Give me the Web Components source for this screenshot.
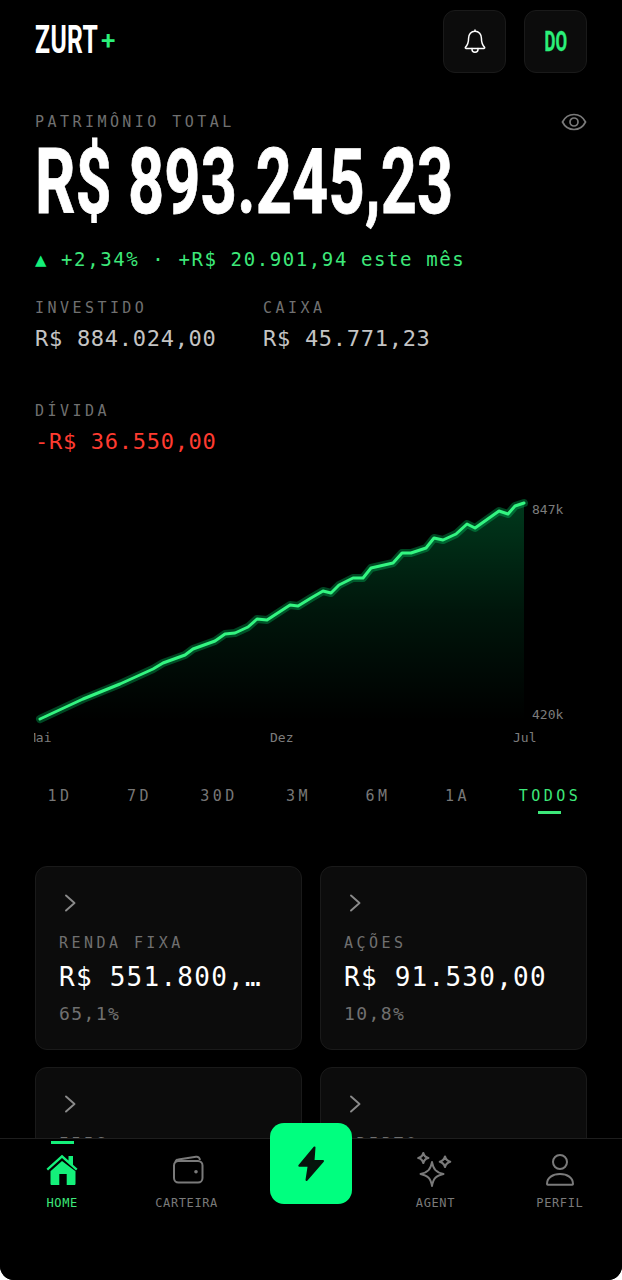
<!DOCTYPE html>
<html lang="pt-BR"><head><meta charset="utf-8"><title>ZURT</title>
<style>
html,body{margin:0;padding:0;background:#fff}
body{width:622px;height:1280px;overflow:hidden;font-family:"DejaVu Sans Mono","Liberation Mono",monospace}
</style></head><body>
<zurt-app>
  <zurt-header></zurt-header>
  <zurt-summary></zurt-summary>
  <zurt-chart></zurt-chart>
  <zurt-ranges></zurt-ranges>
  <div slot="cards">
    <zurt-card label="RENDA FIXA" value="R$ 551.800,00" pct="65,1%"></zurt-card>
    <zurt-card label="AÇÕES" value="R$ 91.530,00" pct="10,8%"></zurt-card>
    <zurt-card label="FIIS"></zurt-card>
    <zurt-card label="CRIPTO"></zurt-card>
  </div>
  <zurt-nav slot="nav"></zurt-nav>
</zurt-app>
<script>
const MONO='"DejaVu Sans Mono","Liberation Mono",monospace';
const COND='Roboto,"Liberation Sans",Arial,sans-serif';
function def(name,html,init){
  customElements.define(name,class extends HTMLElement{
    constructor(){super();this.attachShadow({mode:'open'}).innerHTML=typeof html==='function'?html(this):html;}
    connectedCallback(){ if(init) init(this); }
  });
}
def('zurt-app',`<style>
:host{display:block;position:relative;width:622px;height:1280px;background:#000;overflow:hidden;border-radius:0 0 14px 14px;color:#fff}
.scroll{padding:0 35px;height:1138px;overflow:hidden}
::slotted([slot=cards]){display:grid;grid-template-columns:267px 267px;gap:17px 18px;margin-top:0}
</style><div class="scroll"><slot></slot><slot name="cards"></slot></div><slot name="nav"></slot>`);

def('zurt-header',`<style>
:host{display:flex;align-items:flex-start;justify-content:space-between;padding-top:10px;height:64px}
.logo{display:flex;align-items:center;height:60px;font-family:${COND};font-weight:700;white-space:nowrap}
.z{display:inline-block;font-size:38px;line-height:60px;letter-spacing:.6px;transform:scaleX(.65);transform-origin:0 50%;width:66px}
.p{color:#2bf07a;font-size:26px;font-weight:500;margin-top:-1px;line-height:60px}
.btns{display:flex;gap:18px}
.b{width:61px;height:61px;border:1px solid #1a1a1a;border-radius:12px;background:#0c0c0c;display:flex;align-items:center;justify-content:center}
.do{display:inline-block;color:#2bf07a;font:700 28px ${COND};transform:scaleX(.6);-webkit-text-stroke:.4px #2bf07a}
svg{display:block}
</style>
<div class="logo"><span class="z">ZURT</span><span class="p">+</span></div>
<div class="btns">
<div class="b"><svg width="24" height="26" viewBox="0 0 24 26" fill="none" stroke="#fff" stroke-width="1.5" stroke-linejoin="round" stroke-linecap="round"><path d="M12 2.200c-3.900 0-6.400 3-6.400 6.900 0 5.200-1.600 7.700-3.200 9.300-.3.400-.1 1 .5 1h18.200c.6 0 .8-.6.5-1-1.600-1.600-3.200-4.100-3.200-9.300 0-3.900-2.500-6.900-6.400-6.900z"/><path d="M9 19.600v.7a3 3 0 0 0 6 0v-.7"/><path d="M12 1v1.200"/></svg></div>
<div class="b"><span class="do">DO</span></div>
</div>`);

def('zurt-summary',`<style>
:host{display:block;font-family:${MONO}}
.lbl{font-size:15px;letter-spacing:3.45px;color:#707070;line-height:20px;white-space:nowrap}
.top{display:flex;justify-content:space-between;align-items:center;padding-top:38px}
.big{height:96px;margin-top:2px;font:700 91px/96px ${COND};letter-spacing:.4px;color:#fff;white-space:nowrap;transform:scaleX(.692);transform-origin:0 50%;-webkit-text-stroke:.8px #fff}
.delta{margin-top:16px;font-size:19px;letter-spacing:1.6px;line-height:26px;color:#3de87a;white-space:nowrap}
.delta i{font-style:normal;color:#14f07a}
.stats{display:grid;grid-template-columns:228px 1fr;row-gap:47px;margin-top:26px}
.v{font-size:22px;letter-spacing:.72px;line-height:30px;margin-top:6px;color:#c4c4c4;white-space:nowrap}
.r{color:#ff3b30}
</style>
<div class="top"><span class="lbl">PATRIMÔNIO TOTAL</span>
<svg width="26" height="20" viewBox="0 0 26 20" fill="none" stroke="#7a7a7a" stroke-width="1.7"><path d="M1.500 10C4 5 8 2.500 13 2.500S22 5 24.500 10C22 15 18 17.500 13 17.500S4 15 1.500 10z"/><circle cx="13" cy="10" r="4"/></svg></div>
<div class="big">R$ 893.245,23</div>
<div class="delta"><i>▲</i> +2,34% · +R$ 20.901,94 este mês</div>
<div class="stats">
<div><div class="lbl">INVESTIDO</div><div class="v">R$ 884.024,00</div></div>
<div><div class="lbl">CAIXA</div><div class="v">R$ 45.771,23</div></div>
<div><div class="lbl">DÍVIDA</div><div class="v r">-R$ 36.550,00</div></div>
</div>`);

const line="M40 718 L83 698 L120 683 L153 668 L163 662 L185 654 L193 648 L215 640 L225 633 L235 632 L248 626 L257 618 L267 619 L290 604 L298 605 L311 597 L323 590 L331 592 L339 584 L353 577 L363 577 L371 567 L393 562 L402 552 L411 552 L426 547 L434 537 L443 539 L456 533 L467 523 L475 527 L499 510 L508 513 L515 505 L524 502";
def('zurt-chart',`<style>
:host{display:block;margin:24px -35px 0;height:276px}
svg{display:block}
text{font:13px ${MONO};fill:#7c7c7c}
</style>
<svg width="622" height="276" viewBox="0 480 622 276">
<defs><linearGradient id="g" x1="0" y1="502" x2="0" y2="720" gradientUnits="userSpaceOnUse"><stop offset="0" stop-color="#00ff7f" stop-opacity=".22"/><stop offset=".5" stop-color="#00ff7f" stop-opacity=".085"/><stop offset="1" stop-color="#00ff7f" stop-opacity="0"/></linearGradient>
<clipPath id="c"><rect x="34" y="725" width="60" height="24"/></clipPath></defs>
<path d="${line} L524 720 L40 720 Z" fill="url(#g)"/>
<path d="${line}" fill="none" stroke="#00ff7f" stroke-opacity=".27" stroke-width="8" stroke-linejoin="round" stroke-linecap="round"/>
<path d="${line}" fill="none" stroke="#33f581" stroke-width="3" stroke-linejoin="round" stroke-linecap="round"/>
<text x="532" y="513">847k</text><text x="532" y="718">420k</text>
<g clip-path="url(#c)"><text x="28" y="741">Mai</text></g>
<text x="270" y="741">Dez</text><text x="513" y="741">Jul</text>
</svg>`);

def('zurt-ranges',`<style>
:host{display:flex;gap:30.5px;margin-top:24px;height:85px;font:15px ${MONO};letter-spacing:3.5px;color:#777}
div{width:48px;padding-left:1px;text-align:center;height:30px;line-height:30px;position:relative;white-space:nowrap}
.a{width:72px;padding-left:2px;color:#3de87a}
.a::after{content:"";position:absolute;left:26px;top:30px;width:23px;height:3px;background:#3de87a}
</style><div>1D</div><div>7D</div><div>30D</div><div>3M</div><div>6M</div><div>1A</div><div class="a">TODOS</div>`);

def('zurt-card',(el)=>{
const v=el.getAttribute('value'),p=el.getAttribute('pct');
return `<style>
:host{display:block;box-sizing:border-box;height:184px;background:#0c0c0c;border:1px solid #1a1a1a;border-radius:12px;padding:24px 30px 24px 23px;font-family:${MONO};min-width:0}
svg{display:block;margin-left:4px}
.l{margin-top:18px;font-size:15px;letter-spacing:3.45px;color:#707070;line-height:20px;white-space:nowrap}
.v{margin-top:6px;font-size:26px;letter-spacing:1.25px;line-height:36px;color:#fff;white-space:nowrap;overflow:hidden;text-overflow:ellipsis}
.p{margin-top:7px;font-size:18px;letter-spacing:1.4px;line-height:24px;color:#707070}
</style><svg width="16" height="24" viewBox="0 0 16 24" fill="none" stroke="#8a8a8a" stroke-width="1.9" stroke-linecap="round" stroke-linejoin="round"><path d="M3 4.500l8.500 7.500L3 19.500"/></svg>
<div class="l">${el.getAttribute('label')}</div>${v?`<div class="v">${v}</div>`:''}${p?`<div class="p">${p}</div>`:''}`;});

def('zurt-nav',`<style>
:host{display:flex;position:absolute;left:0;right:0;top:1138px;bottom:0;background:#000;border-top:1px solid #1e1e1e;font:12px ${MONO};letter-spacing:.6px;color:#7a7a7a}
.i{flex:1;display:flex;flex-direction:column;align-items:center;height:74px;position:relative;padding-top:12px;box-sizing:border-box;white-space:nowrap}
.i svg{display:block;height:36px}
.t{margin-top:8px;line-height:16px}
.on{color:#3de87a}
.on::before{content:"";position:absolute;top:2px;left:50%;margin-left:-11.500px;width:23px;height:3px;background:#14f07a}
.fab{position:absolute;left:270px;top:-16px;width:82px;height:81px;border-radius:14px;background:#00ff7f;display:flex;align-items:center;justify-content:center}
</style>
<div class="i on"><svg width="36" height="36" viewBox="0 0 36 36"><path d="M18 3.800L2.500 17.800l1.500 1.700L18 6.900l14 12.600 1.500-1.700-4.500-4V5h-4.500v4.600z" fill="#14f07a"/><path d="M18 9.900L6.500 20.300v12.400c0 .8.500 1.300 1.300 1.300h7.500v-11h7.400v11h7.500c.8 0 1.300-.5 1.300-1.300V20.300z" fill="#14f07a"/></svg><span class="t">HOME</span></div>
<div class="i"><svg width="36" height="36" viewBox="0 0 36 36" fill="none" stroke="#7a7a7a" stroke-width="2" stroke-linejoin="round"><rect x="5" y="10" width="28.500" height="21.500" rx="4.500"/><path d="M6.500 11c.3-1.600 1.200-2.300 2.800-2.500L27 5.800c2.300-.3 3.800 1 3.900 3.200"/><circle cx="27" cy="20.700" r="1.800" fill="#7a7a7a" stroke="none"/></svg><span class="t">CARTEIRA</span></div>
<div class="i"></div>
<div class="i"><svg width="36" height="36" viewBox="0 0 36 36" fill="none" stroke="#7a7a7a" stroke-width="1.900" stroke-linejoin="round"><path d="M15 11c1.400 7.500 3.900 10.200 11.500 12-7.600 1.700-10.100 4.300-11.500 12-1.400-7.700-3.900-10.300-11.500-12 7.600-1.800 10.100-4.500 11.500-12z"/><path d="M6.300 2c.7 3 1.900 4.200 5 5-3.100.8-4.300 2-5 5-.7-3-1.900-4.200-5-5 3.100-.8 4.300-2 5-5z" stroke-width="2.200"/><path d="M28 5.500c.7 3 1.900 4.200 5.200 5.200-3.300 1-4.500 2.200-5.200 5.200-.7-3-1.900-4.200-5.200-5.200 3.300-1 4.500-2.200 5.200-5.200z" stroke-width="2.200"/></svg><span class="t">AGENT</span></div>
<div class="i"><svg width="36" height="36" viewBox="0 0 36 36" fill="none" stroke="#7a7a7a" stroke-width="2" stroke-linejoin="round"><circle cx="18" cy="11" r="7"/><path d="M5 33c0-6.200 5.700-10 13-10s13 3.800 13 10c0 .5-.3.800-.8.800H5.800c-.5 0-.8-.3-.8-.8z"/></svg><span class="t">PERFIL</span></div>
<div class="fab"><svg width="36" height="40" viewBox="0 0 36 40"><path d="M21.500 3.500L6.300 21.700h9.400L13.500 36 30 17h-9.500z" fill="#06140c" stroke="#06140c" stroke-width="2" stroke-linejoin="round"/></svg></div>`);
</script>
</body></html>
